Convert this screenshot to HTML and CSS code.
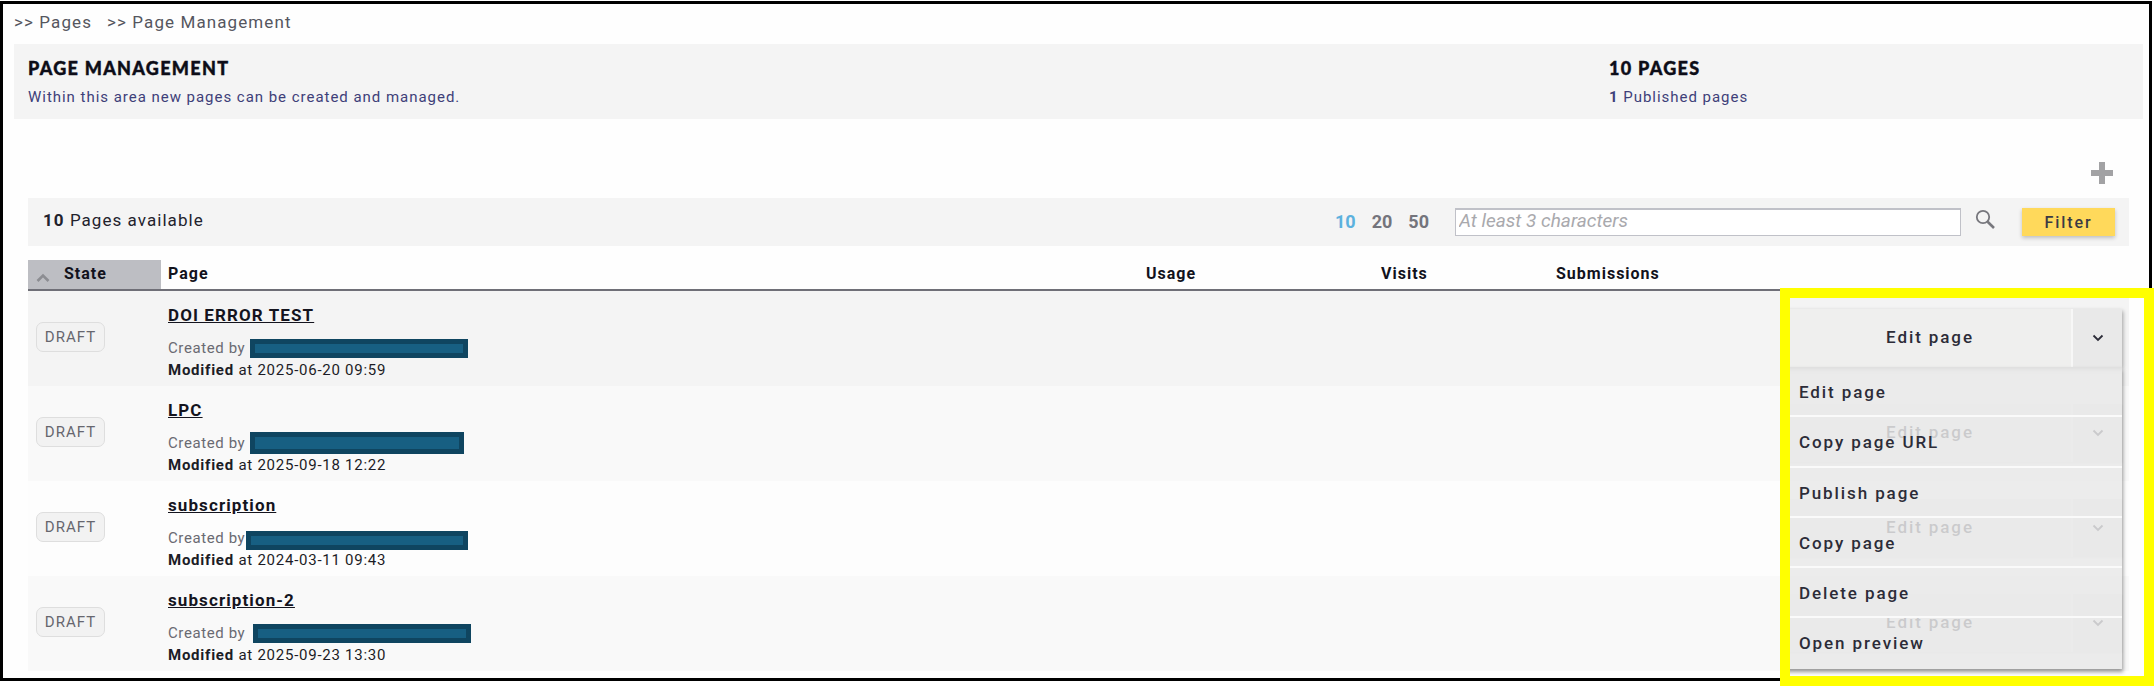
FILE: index.html
```html
<!DOCTYPE html>
<html lang="en">
<head>
<meta charset="utf-8">
<title>Page Management</title>
<link rel="stylesheet" href="styles.css">
</head>
<body>
<div class="frame">
  <nav class="crumbs"><span>&gt;&gt; Pages</span><span>&gt;&gt; Page Management</span></nav>
  <header class="banner">
    <div class="banner-main">
      <h1>PAGE MANAGEMENT</h1>
      <p>Within this area new pages can be created and managed.</p>
    </div>
    <div class="banner-side">
      <h2>10 PAGES</h2>
      <p><b>1</b> Published pages</p>
    </div>
  </header>
  <section class="content">
    <div class="add-row">
      <svg class="plus" viewBox="0 0 22 22" aria-hidden="true"><path d="M8 0h6v8h8v6h-8v8H8v-8H0V8h8z"/></svg>
    </div>
    <div class="toolbar">
      <div class="count"><b>10</b> Pages available</div>
      <div class="sizes"><span class="on">10</span><span>20</span><span>50</span></div>
      <input class="search" type="text" placeholder="At least 3 characters">
      <svg class="lens" viewBox="0 0 21 20" aria-hidden="true"><circle cx="8" cy="8" r="6.2"/><path class="handle" d="M12.6 12.8 19 19"/></svg>
      <button class="filter">Filter</button>
    </div>
    <div class="thead">
      <div class="th state-th"><svg class="sort" viewBox="0 0 14 9" aria-hidden="true"><path d="M1.5 8 7 2.5 12.5 8"/></svg>State</div>
      <div class="th">Page</div>
      <div class="th">Usage</div>
      <div class="th">Visits</div>
      <div class="th">Submissions</div>
      <div></div>
    </div>
    <div class="row row-a">
      <div class="cell-state"><span class="badge">DRAFT</span></div>
      <div class="cell-page">
        <a class="title">DOI ERROR TEST</a>
        <div class="meta">Created by<span class="redact r1"></span></div>
        <div class="mod"><b>Modified</b> at 2025-06-20 09:59</div>
      </div>
      <div></div><div></div><div></div>
      <div class="cell-act">
        <div class="split open">
          <span class="split-label">Edit page</span>
          <span class="split-arrow"><svg viewBox="0 0 12 8" aria-hidden="true"><path d="M1.5 1.5 6 6l4.5-4.5"/></svg></span>
          <ul class="menu">
            <li>Edit page</li>
            <li>Copy page URL</li>
            <li>Publish page</li>
            <li>Copy page</li>
            <li>Delete page</li>
            <li>Open preview</li>
          </ul>
        </div>
      </div>
    </div>
    <div class="row row-b">
      <div class="cell-state"><span class="badge">DRAFT</span></div>
      <div class="cell-page">
        <a class="title">LPC</a>
        <div class="meta">Created by<span class="redact r2"></span></div>
        <div class="mod"><b>Modified</b> at 2025-09-18 12:22</div>
      </div>
      <div></div><div></div><div></div>
      <div class="cell-act">
        <div class="split"><span class="split-label">Edit page</span><span class="split-arrow"><svg viewBox="0 0 12 8" aria-hidden="true"><path d="M1.5 1.5 6 6l4.5-4.5"/></svg></span></div>
      </div>
    </div>
    <div class="row row-c">
      <div class="cell-state"><span class="badge">DRAFT</span></div>
      <div class="cell-page">
        <a class="title">subscription</a>
        <div class="meta">Created by<span class="redact r3"></span></div>
        <div class="mod"><b>Modified</b> at 2024-03-11 09:43</div>
      </div>
      <div></div><div></div><div></div>
      <div class="cell-act">
        <div class="split"><span class="split-label">Edit page</span><span class="split-arrow"><svg viewBox="0 0 12 8" aria-hidden="true"><path d="M1.5 1.5 6 6l4.5-4.5"/></svg></span></div>
      </div>
    </div>
    <div class="row row-b">
      <div class="cell-state"><span class="badge">DRAFT</span></div>
      <div class="cell-page">
        <a class="title">subscription-2</a>
        <div class="meta">Created by<span class="redact r4"></span></div>
        <div class="mod"><b>Modified</b> at 2025-09-23 13:30</div>
      </div>
      <div></div><div></div><div></div>
      <div class="cell-act">
        <div class="split"><span class="split-label">Edit page</span><span class="split-arrow"><svg viewBox="0 0 12 8" aria-hidden="true"><path d="M1.5 1.5 6 6l4.5-4.5"/></svg></span></div>
      </div>
    </div>
  </section>
</div>
<div class="highlight"></div>
</body>
</html>
```
FILE: styles.css
```css
* { box-sizing: border-box; }
html, body { margin: 0; padding: 0; background: #fff; }
body {
  position: relative;
  width: 2154px;
  height: 686px;
  overflow: hidden;
  font-family: Roboto, "Liberation Sans", sans-serif;
  color: #15151f;
  padding-top: 1px;
}
.frame {
  width: 2152px;
  height: 680px;
  border: 3px solid #000;
  background: #fefefe;
  padding: 0 6px 0 11px;
  overflow: hidden;
}
.crumbs {
  height: 40px;
  padding-top: 7px;
  font-size: 17px;
  line-height: 22px;
  letter-spacing: 1.1px;
  color: #55565e;
  display: flex;
  gap: 15px;
}
.banner {
  height: 75px;
  background: #f4f4f4;
  padding: 13px 0 0 14px;
  display: flex;
}
.banner-main { width: 1581px; }
.banner h1, .banner h2 {
  margin: 0;
  font-family: Lato, sans-serif;
  font-weight: 900;
  font-size: 18px;
  line-height: 22px;
  letter-spacing: 1.3px;
  -webkit-text-stroke: .4px #0d0d18;
  color: #0d0d18;
}
.banner p {
  margin: 8px 0 0;
  font-size: 15px;
  line-height: 20px;
  letter-spacing: .97px;
  color: #3e4079;
}
.content { margin: 0 14px; }
.add-row {
  height: 79px;
  display: flex;
  justify-content: flex-end;
  align-items: flex-start;
  padding: 43px 16px 0 0;
}
.plus { width: 22px; height: 22px; fill: #a2a2a4; }
.toolbar {
  height: 48px;
  background: #f4f4f4;
  display: flex;
  align-items: center;
  padding: 0 14px 0 15px;
}
.count { font-size: 17px; letter-spacing: 1.05px; margin: -4px auto 0 0; color: #22222c; }
.sizes {
  display: flex;
  gap: 16px;
  font-size: 18px;
  font-weight: 700;
  color: #74747c;
  margin: -1px 26px 0 0;
}
.sizes .on { color: #5cb1de; }
.search {
  width: 506px;
  height: 28px;
  border: 1px solid #c0c1c8;
  border-top-width: 2px;
  background: #fff;
  padding: 0 3px 5px;
  font-family: Roboto, sans-serif;
  font-size: 19px;
  font-style: italic;
  outline: none;
  border-radius: 0;
}
.search::placeholder { color: #a9a9ad; opacity: 1; }
.lens { width: 21px; height: 20px; margin: -6px 26px 0 14px; fill: none; stroke: #77777d; stroke-width: 1.8; }
.lens .handle { stroke-width: 2.6; }
.filter {
  width: 93px;
  height: 28px;
  background: #ffd95b;
  border: 0;
  box-shadow: 0 2px 4px rgba(0, 0, 0, .22);
  font-family: Roboto, sans-serif;
  font-size: 16px;
  font-weight: 500;
  letter-spacing: 1.9px;
  color: #3a3a44;
  padding: 1px 0 0;
}
.thead, .row {
  display: grid;
  grid-template-columns: 133px 978px 235px 175px 236px 344px;
}
.thead {
  margin-top: 14px;
  height: 31px;
  border-bottom: 2px solid #6f6f77;
}
.th {
  padding-left: 7px;
  font-size: 16px;
  font-weight: 700;
  letter-spacing: 1px;
  line-height: 27px;
  color: #12121c;
}
.state-th {
  background: #bdbec3;
  padding: 0 0 2px 8px;
  display: flex;
  align-items: center;
  gap: 14px;
}
.sort { width: 14px; height: 9px; margin-top: 7px; fill: none; stroke: #8c8d92; stroke-width: 2.6; }
.row { height: 95px; }
.row-a { background: #f4f4f4; }
.row-b { background: #f9f9f9; }
.row-c { background: #fdfdfd; }
.cell-state { display: flex; align-items: center; padding: 0 0 3px 8px; }
.badge {
  width: 69px;
  height: 30px;
  border: 1px solid #dedede;
  border-radius: 7px;
  background: #f2f2f2;
  font-size: 15px;
  letter-spacing: 1px;
  line-height: 28px;
  text-align: center;
  color: #66666e;
}
.cell-page { padding: 13px 0 0 7px; }
.title {
  display: block;
  height: 22px;
  margin-bottom: 11px;
  font-size: 17px;
  font-weight: 700;
  line-height: 22px;
  letter-spacing: 1.1px;
  text-decoration: underline;
  color: #14141e;
}
.meta {
  height: 22px;
  font-size: 15px;
  line-height: 22px;
  letter-spacing: .6px;
  color: #6a6a72;
  display: flex;
  align-items: center;
}
.mod {
  height: 22px;
  font-size: 15px;
  line-height: 22px;
  letter-spacing: .75px;
  color: #1c1c26;
}
.redact {
  display: block;
  background: #175f82;
  border: 5px solid #0f4560;
  height: 19px;
  flex: none;
}
.r1 { margin-left: 5px; width: 218px; margin-top: 1px; }
.r2 { margin-left: 5px; width: 214px; height: 22px; }
.r3 { margin-left: 1px; width: 222px; margin-top: 5px; }
.r4 { margin-left: 8px; width: 218px; margin-top: 1px; }
.cell-act { padding: 0 7px 1px 0; display: flex; align-items: center; }
.split {
  position: relative;
  width: 337px;
  height: 58px;
  display: flex;
  color: #2c2c38;
  background: #efefee;
  box-shadow: 0 1px 2px rgba(0, 0, 0, .08);
}
.split.open { z-index: 2; box-shadow: 1px 2px 4px rgba(0, 0, 0, .35); }
.split-label {
  flex: 1;
  text-align: center;
  font-size: 17px;
  font-weight: 500;
  letter-spacing: 1.9px;
  line-height: 56px;
  padding-left: 4px;
  border-right: 2px solid #f7f7f7;
}
.split-arrow {
  width: 49px;
  display: flex;
  align-items: center;
  justify-content: center;
  background: #e9e9e9;
}
.split-arrow svg { width: 12px; height: 8px; fill: none; stroke: currentColor; stroke-width: 1.8; }
.menu {
  position: absolute;
  top: 58px;
  left: 0;
  right: 0;
  margin: 0;
  padding: 0;
  list-style: none;
  box-shadow: 1px 3px 4px rgba(0, 0, 0, .4);
}
.menu li {
  height: 50.3px;
  padding-left: 14px;
  border-bottom: 2px solid #fafafa;
  background: rgba(232, 232, 232, .84);
  font-size: 17px;
  font-weight: 500;
  letter-spacing: 1.9px;
  line-height: 50px;
  color: #2c2c38;
}
.menu li:last-child { border-bottom: 0; }
.highlight {
  position: absolute;
  left: 1780px;
  top: 288px;
  width: 374px;
  height: 398px;
  border: 10px solid #ffff00;
  z-index: 5;
}
```
